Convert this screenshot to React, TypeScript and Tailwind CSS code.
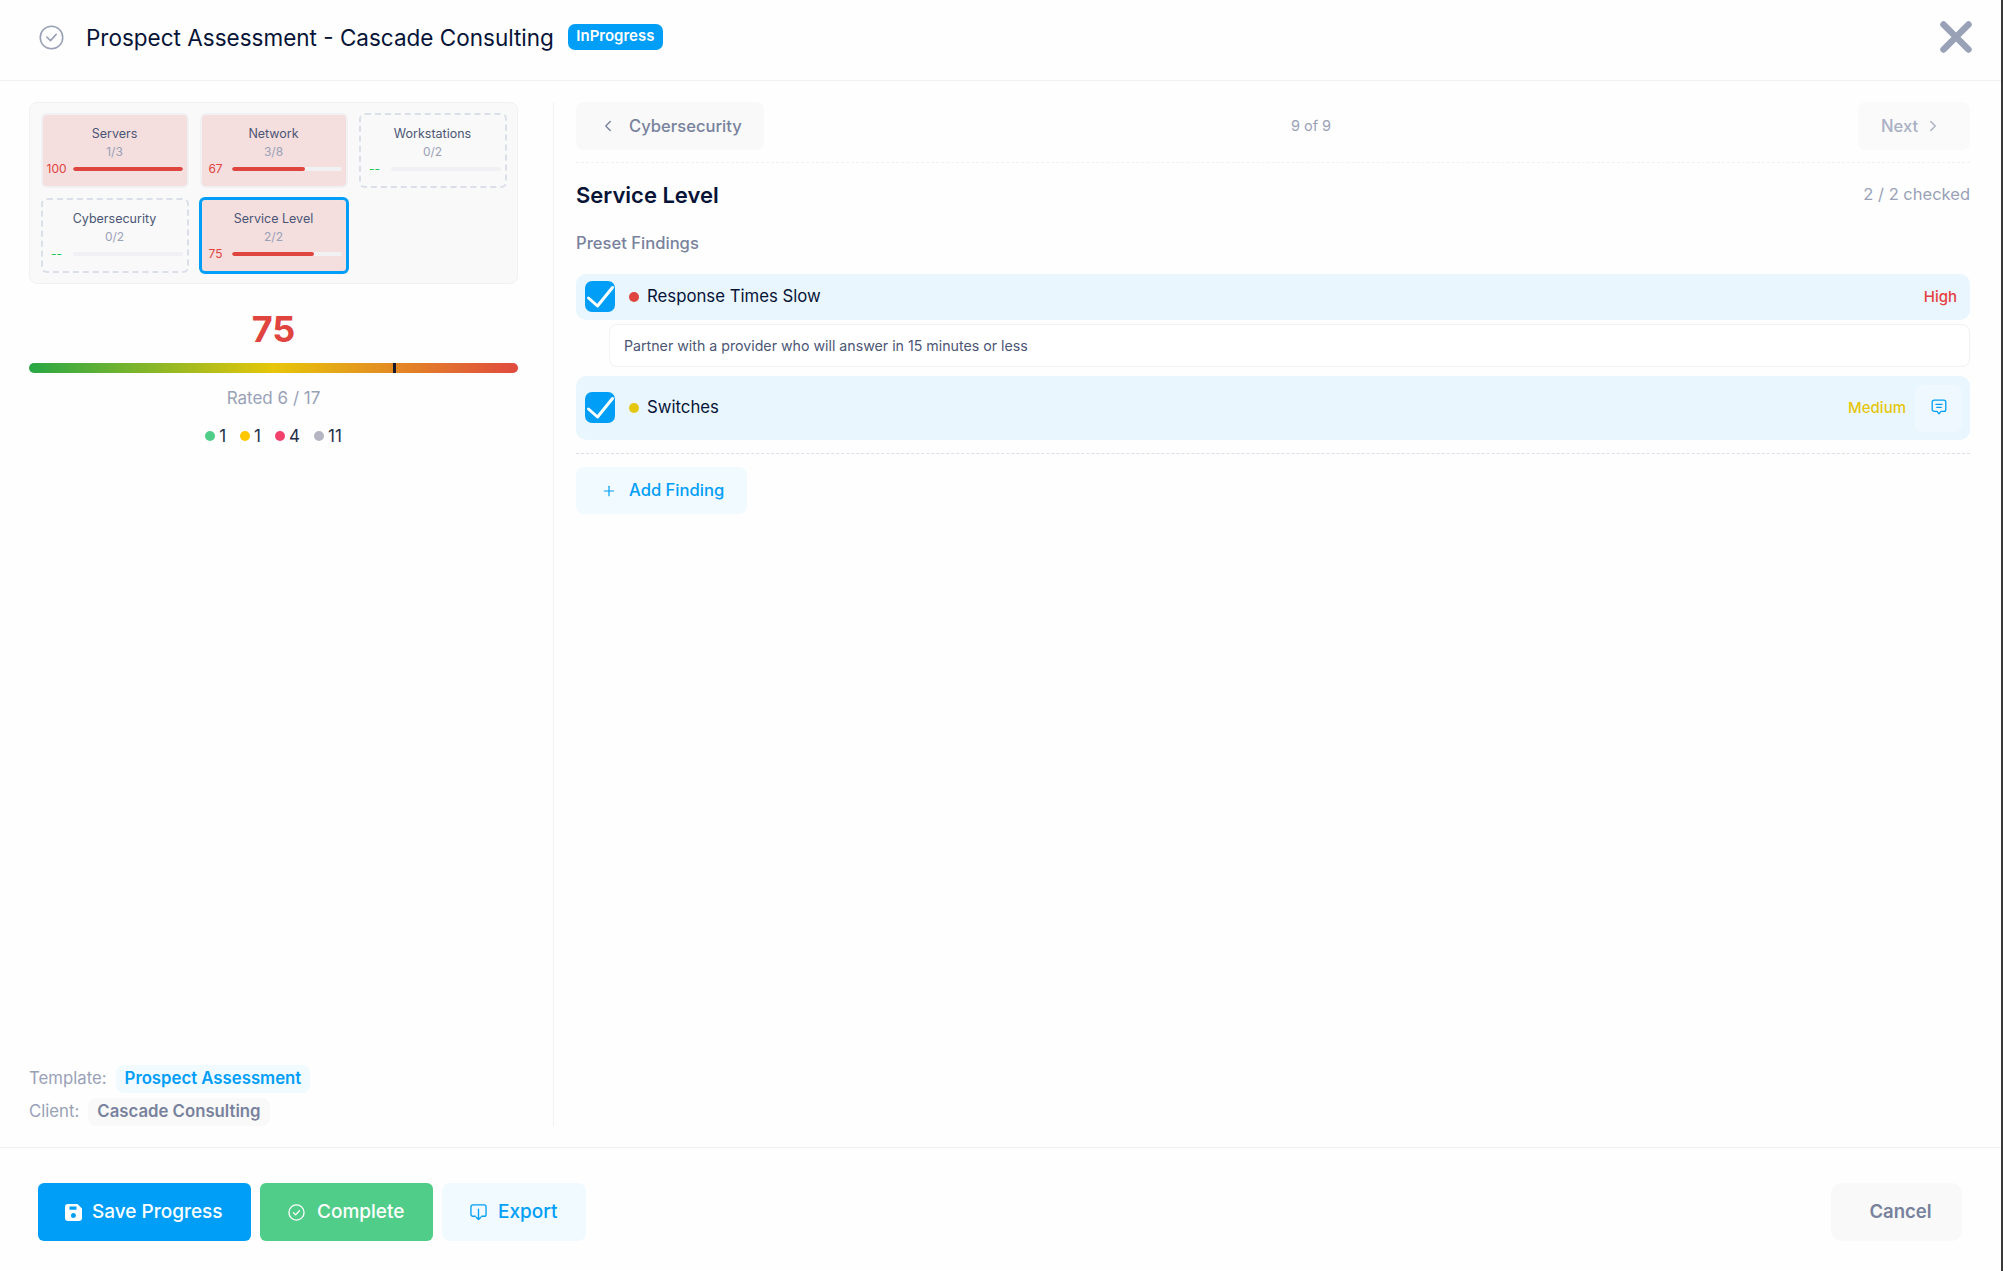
import React from 'react';
import { ChevronLeft, ChevronRight, Plus } from 'lucide-react';

interface TileProps {
  title: string;
  sub: string;
  score?: number;
  selected?: boolean;
}

const Tile: React.FC<TileProps> = ({ title, sub, score, selected }) => {
  const rated = score !== undefined;
  let box = 'h-[75px] border-2 border-dashed border-[#dbdfe9]';
  if (rated) box = 'h-[75px] border-2 border-[#f1f1f4] bg-[#f4dede]';
  if (selected) box = 'h-[77px] border-[3px] border-[#009ef7] bg-[#f4dede] -m-px';

  return (
    <div className={`rounded-[6px] flex flex-col items-center pt-[10px] ${box}`}>
      <div className="text-[12.5px] leading-[18px] text-[#4b5675]">{title}</div>
      <div className="text-[12px] leading-[18px] text-[#99a1b7]">{sub}</div>
      <div className="w-full flex items-center gap-[6px] pl-[4px] pr-[4px]">
        <span className={`min-w-[20px] text-center text-[12px] leading-[16px] ${rated ? 'text-[#e0443e]' : 'text-[#17c653]'}`}>
          {rated ? score : '--'}
        </span>
        <div className="flex-1 h-[4px] rounded-full bg-[#f1f1f4] overflow-hidden">
          {rated && <div className="h-full rounded-full bg-[#e0443e]" style={{ width: `${score}%` }} />}
        </div>
      </div>
    </div>
  );
};

const CheckBox = () => (
  <div className="w-[30px] h-[31px] rounded-[7px] bg-[#009ef7] shrink-0 -mt-[2px]">
    <svg viewBox="0 0 30 31" className="w-[30px] h-[31px]" fill="none" stroke="#fff" strokeWidth="3" strokeLinecap="round" strokeLinejoin="round">
      <path d="M3.5 17 12.5 25 27.5 6.5" />
    </svg>
  </div>
);

const LegendItem = ({ color, value }: { color: string; value: number }) => (
  <div className="flex items-center gap-[4px]">
    <span className={`w-[10px] h-[10px] rounded-full ${color}`} />
    <span>{value}</span>
  </div>
);

export default function App() {
  return (
    <div className="w-[2003px] h-[1271px] bg-[#3a3a3a] overflow-hidden font-['Inter',sans-serif]">
      <div className="w-[2001px] h-[1271px] bg-[#fefefe] flex flex-col">
        {/* header */}
        <div className="h-[81px] shrink-0 border-b border-[#f1f1f4] flex items-center pl-[39px] pr-[29px] pb-[5px]">
          <svg viewBox="0 0 24 24" className="w-[25px] h-[25px] text-[#99a1b7] -mt-[1px]" fill="none" stroke="currentColor" strokeWidth="1.5" strokeLinecap="round" strokeLinejoin="round">
            <circle cx="12" cy="12" r="10.8" />
            <path d="m7.500 11.500 3.500 3.500 5.500-6" />
          </svg>
          <h1 className="ml-[22px] text-[22.5px] font-normal text-[#071437]">Prospect Assessment - Cascade Consulting</h1>
          <span className="ml-[14px] h-[26px] w-[95px] rounded-[7px] bg-[#009ef7] text-white text-[15px] font-semibold flex items-center justify-center -mt-[2px]">InProgress</span>
          <svg viewBox="0 0 32 32" className="ml-auto w-[32px] h-[32px] -mt-[1px]" fill="none" stroke="#99a1b7" strokeWidth="6.5" strokeLinecap="round">
            <path d="M3.500 3.500 28.500 28.500M28.500 3.500 3.500 28.500" />
          </svg>
        </div>

        {/* body */}
        <div className="flex-1 flex pt-[21px] pl-[29px] pb-[21px] min-h-0">
          <div className="w-[525px] shrink-0 pr-[35px] border-r border-[#f1f1f4] flex flex-col justify-between">
            <div>
              <div className="h-[182px] rounded-[8px] border border-[#f1f1f4] bg-[#f9f9f9] px-[10.500px] pt-[10px] grid grid-cols-3 gap-x-[11px] gap-y-[10px] content-start">
                <Tile title="Servers" sub="1/3" score={100} />
                <Tile title="Network" sub="3/8" score={67} />
                <Tile title="Workstations" sub="0/2" />
                <Tile title="Cybersecurity" sub="0/2" />
                <Tile title="Service Level" sub="2/2" score={75} selected />
              </div>

              <div className="mt-[25px] text-center text-[36px] leading-[40px] font-bold text-[#e0443e]">75</div>
              <div className="relative mt-[14px] h-[10px] rounded-[5px] bg-[linear-gradient(to_right,#28a745,#e6c60a_50%,#e04a3f)]">
                <div className="absolute top-0 left-[75%] -translate-x-full w-[3px] h-full bg-[#1a1a2e]" />
              </div>
              <div className="mt-[14px] text-center text-[17px] leading-[22px] text-[#99a1b7]">Rated 6 / 17</div>
              <div className="mt-[17px] flex justify-center gap-[14px] text-[17px] leading-[20px] text-[#252f4a]">
                <LegendItem color="bg-[#50cd89]" value={1} />
                <LegendItem color="bg-[#ffc700]" value={1} />
                <LegendItem color="bg-[#f1416c]" value={4} />
                <LegendItem color="bg-[#b5b5c3]" value={11} />
              </div>
            </div>

            <div className="flex flex-col gap-[5px] text-[16.750px]">
              <div className="flex items-center gap-[9px]">
                <span className="text-[#99a1b7]">Template:</span>
                <span className="h-[28px] px-[9px] rounded-[8px] bg-[#f1faff] text-[#009ef7] font-semibold flex items-center">Prospect Assessment</span>
              </div>
              <div className="flex items-center gap-[9px]">
                <span className="text-[#99a1b7]">Client:</span>
                <span className="h-[28px] px-[9px] rounded-[8px] bg-[#f9f9f9] text-[#78829d] font-semibold flex items-center">Cascade Consulting</span>
              </div>
            </div>
          </div>

          <div className="w-[1416px] shrink-0 pl-[22px]">
            {/* nav */}
            <div className="h-[61px] border-b border-dashed border-[#f1f1f4] flex justify-between items-start">
              <button className="h-[48px] w-[188px] rounded-[8px] bg-[#f9f9f9] text-[#78829d] text-[16.600px] font-medium flex items-center pl-[23px] gap-[12px]">
                <ChevronLeft size={18} strokeWidth={1.8} />
                Cybersecurity
              </button>
              <span className="h-[47px] flex items-center text-[14.500px] text-[#99a1b7]">9 of 9</span>
              <button className="h-[48px] w-[112px] rounded-[8px] bg-[#fafafa] text-[#a9b0c3] text-[16.600px] font-medium flex items-center pl-[23px] gap-[6px]">
                Next
                <ChevronRight size={18} strokeWidth={1.8} />
              </button>
            </div>

            <div className="mt-[17px] flex justify-between items-center h-[30px]">
              <h2 className="text-[22px] font-semibold text-[#071437]">Service Level</h2>
              <span className="text-[16.500px] -mt-[2px] text-[#99a1b7]">2 / 2 checked</span>
            </div>

            <div className="mt-[22px] text-[16.600px] leading-[22px] font-medium text-[#78829d]">Preset Findings</div>

            <div className="mt-[20px] h-[46px] rounded-[10px] bg-[#e9f6fe] flex items-center pl-[9px] pr-[13px]">
              <CheckBox />
              <span className="ml-[14px] w-[10px] h-[10px] rounded-full bg-[#e0443e]" />
              <span className="ml-[8px] text-[16.750px] font-normal text-[#071437]">Response Times Slow</span>
              <span className="ml-auto text-[15px] font-medium text-[#e74040]">High</span>
            </div>

            <div className="mt-[4px] ml-[33px] h-[43px] rounded-[8px] border border-[#f1f1f4] bg-white flex items-center pl-[14px] text-[14.200px] text-[#4b5675]">
              Partner with a provider who will answer in 15 minutes or less
            </div>

            <div className="mt-[9px] h-[64px] rounded-[10px] bg-[#e9f6fe] flex items-center pl-[9px] pr-[8px]">
              <CheckBox />
              <span className="ml-[14px] w-[10px] h-[10px] rounded-full bg-[#e6c60a]" />
              <span className="ml-[8px] text-[16.750px] font-normal text-[#071437]">Switches</span>
              <span className="ml-auto text-[15px] font-medium text-[#e6c60a]">Medium</span>
              <div className="ml-[9px] w-[47px] h-[47px] rounded-[8px] bg-[#eef8fe] flex items-center justify-center">
                <svg viewBox="0 0 16 16" className="w-[16px] h-[16px] -mt-[3px]" fill="none" stroke="#009ef7" strokeWidth="1.3" strokeLinecap="round" strokeLinejoin="round">
                  <path d="M3.200 1.200h9.600a2 2 0 0 1 2 2v7.200a2 2 0 0 1-2 2H10L8 14.800 6 12.400H3.200a2 2 0 0 1-2-2V3.200a2 2 0 0 1 2-2Z" />
                  <path d="M5 5.400h6M5.800 8.400h4.400" />
                </svg>
              </div>
            </div>

            <div className="mt-[13px] border-t border-dashed border-[#dbdfe9]" />

            <button className="mt-[13px] h-[47px] w-[171px] rounded-[8px] bg-[#f1faff] text-[#009ef7] text-[16.600px] font-medium flex items-center pl-[25px] gap-[12px]">
              <Plus size={16} strokeWidth={1.8} />
              Add Finding
            </button>
          </div>
        </div>

        {/* footer */}
        <div className="h-[124px] shrink-0 border-t border-[#f1f1f4] flex items-start pt-[35px] pl-[38px] pr-[39px] gap-[9px] text-[19px] font-medium">
          <button className="h-[58px] w-[213px] rounded-[6px] bg-[#009ef7] text-white flex items-center pl-[27px] gap-[10px]">
            <svg viewBox="0 0 17 17" className="w-[17px] h-[17px]" fill="#fff" fillRule="evenodd">
              <path d="M3 0h9.500L17 4.500V14a3 3 0 0 1-3 3H3a3 3 0 0 1-3-3V3a3 3 0 0 1 3-3Zm1.500 2.500v3.200h7V2.500h-7ZM8.500 9a2.500 2.500 0 1 0 0 5 2.500 2.500 0 0 0 0-5Z" />
            </svg>
            Save Progress
          </button>
          <button className="h-[58px] w-[173px] rounded-[6px] bg-[#50cd89] text-white flex items-center pl-[28px] gap-[12px]">
            <svg viewBox="0 0 18 18" className="w-[17px] h-[17px]" fill="none" stroke="#fff" strokeWidth="1.4" strokeLinecap="round" strokeLinejoin="round">
              <circle cx="9" cy="9" r="8" />
              <path d="m5.800 9.200 2.300 2.300 4-4.300" />
            </svg>
            Complete
          </button>
          <button className="h-[58px] w-[144px] rounded-[8px] bg-[#f1faff] text-[#009ef7] flex items-center pl-[28px] gap-[11px]">
            <svg viewBox="0 0 18 18" className="w-[17px] h-[17px]" fill="none" stroke="#009ef7" strokeWidth="1.4" strokeLinecap="round" strokeLinejoin="round">
              <path d="M5.500 13H3a2 2 0 0 1-2-2V3a2 2 0 0 1 2-2h12a2 2 0 0 1 2 2v8a2 2 0 0 1-2 2h-2.500" />
              <path d="M9 5.500V16.500M6.500 14 9 16.500 11.500 14" />
            </svg>
            Export
          </button>
          <button className="ml-auto h-[58px] w-[131px] rounded-[10px] bg-[#f9f9f9] text-[#78829d] text-[18.500px] font-semibold flex items-center justify-center pl-[8px]">
            Cancel
          </button>
        </div>
      </div>
    </div>
  );
}
